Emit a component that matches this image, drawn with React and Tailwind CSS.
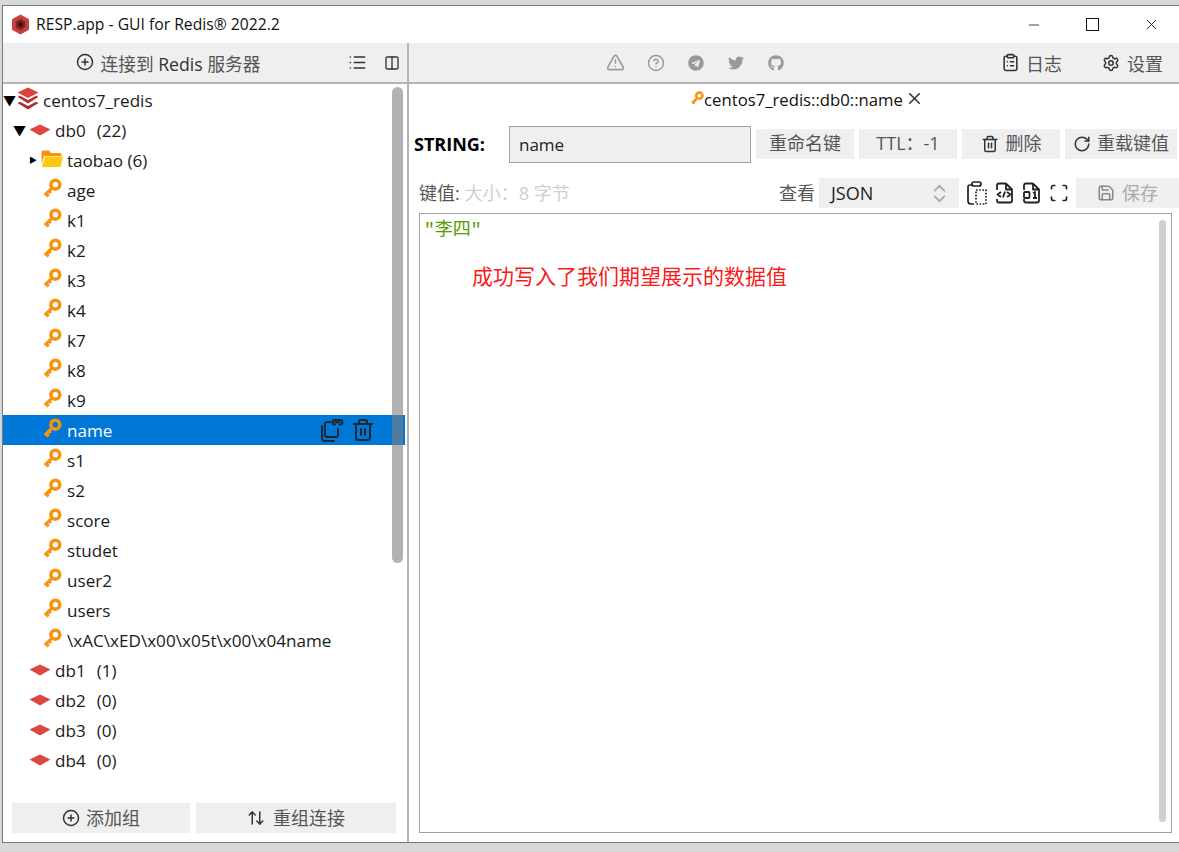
import React from 'react';
import { Minus, X, CirclePlus, List, Columns2, TriangleAlert, CircleHelp, ClipboardList, Settings, Trash2, RotateCw, Save, ChevronsUpDown, ArrowUpDown, Scan } from 'lucide-react';
import { FaTelegram, FaTwitter, FaGithub } from 'react-icons/fa';

const uiFont = '"Open Sans", "Noto Sans CJK SC", sans-serif';

const KeyIcon = ({ className }) => (
  <svg viewBox="0 0 18 18" className={className}>
    <circle cx="12" cy="6" r="4" fill="none" stroke="#f7930e" strokeWidth="3.2" />
    <path d="M9 9 L2.5 15.5 M3.5 14 L6 16.5 M6 11.5 L8 13.5" fill="none" stroke="#f7930e" strokeWidth="2.8" />
  </svg>
);

const DbIcon = () => (
  <svg viewBox="0 0 22 12" className="w-[22px] h-[12px] shrink-0">
    <path d="M11 0.5 L21.5 5.5 L11 11.5 L0.5 5.5 Z" fill="#dd4743" />
  </svg>
);

const StackIcon = () => (
  <svg viewBox="0 0 22 24" className="w-[22px] h-[24px] shrink-0">
    <path d="M11 0.5 L21.5 5.5 L11 11 L0.5 5.5 Z" fill="#d9423d" />
    <path d="M0.5 10 L3 8.8 L11 13 L19 8.8 L21.5 10 L11 16.5 Z" fill="#b03531" />
    <path d="M0.5 16 L3 14.8 L11 19 L19 14.8 L21.5 16 L11 22.5 Z" fill="#a5302d" />
  </svg>
);

const LogoIcon = () => (
  <svg viewBox="0 0 20 22" className="w-[19px] h-[21px] shrink-0">
    <path d="M10 0.5 L19 5.5 L19 16.5 L10 21.5 L1 16.5 L1 5.5 Z" fill="#c8403c" />
    <path d="M10 5 L15 8 L15 14 L10 17 L5 14 L5 8 Z" fill="#7c2422" />
    <circle cx="10" cy="11" r="2.6" fill="#3c1110" />
  </svg>
);

const FolderIcon = () => (
  <svg viewBox="0 0 22 18" className="w-[22px] h-[18px] shrink-0">
    <path d="M0.5 2 Q0.5 0.5 2 0.5 H8 L10 3 H19 Q20.5 3 20.5 4.5 V6 H3 L0.5 14 Z" fill="#f7930e" />
    <path d="M4 6.5 H22 L19.5 17 H0.8 Z" fill="#ffc808" />
  </svg>
);

const CopyLinkIcon = () => (
  <svg viewBox="0 0 24 24" fill="none" stroke="#1c2733" strokeWidth="2" strokeLinecap="round" strokeLinejoin="round" className="w-[24px] h-[24px]">
    <path d="M10 4 H7 Q5 4 5 6 V17 Q5 19 7 19 H16 Q18 19 18 17 V11" />
    <path d="M2 8 V20 Q2 23 5 23 H14" />
    <path d="M15 6.5 H14.5 Q12.5 6.5 12.5 4.5 Q12.5 2 14.5 2 H20 Q22.5 2 22.5 4.5 Q22.5 6.5 20 6.5 H19.5" />
    <path d="M15.5 4.3 H19.5" />
  </svg>
);

const ClipboardDashIcon = () => (
  <svg viewBox="0 0 20 24" fill="none" stroke="#222" strokeWidth="1.7" className="w-[20px] h-[24px]">
    <path d="M5 4 H3 Q1 4 1 6 V20 Q1 23 4 23 H7" />
    <rect x="5" y="1" width="9" height="4" rx="2" />
    <path d="M9 9 H19 V23 H9 Z" strokeDasharray="1.6 1.6" />
  </svg>
);

const FileOutline = () => (
  <path d="M11 1.5 H4 Q2 1.5 2 3.5 V8 M11 1.5 L17 7.5 V18.5 Q17 20.5 15 20.5 H4 Q2 20.5 2 18.5 V17 M11 1.5 V7.5 H17" />
);

const FileCodeIcon = () => (
  <svg viewBox="0 0 19 22" fill="none" stroke="#222" strokeWidth="1.8" strokeLinejoin="round" className="w-[19px] h-[22px]">
    <FileOutline />
    <path d="M6 10 L2.5 12.5 L6 15 M12 10 L15.5 12.5 L12 15 M10 9.5 L8 15.5" />
  </svg>
);

const FileBinaryIcon = () => (
  <svg viewBox="0 0 19 22" fill="none" stroke="#222" strokeWidth="1.8" strokeLinejoin="round" className="w-[19px] h-[22px]">
    <FileOutline />
    <rect x="2" y="10" width="5.5" height="6" rx="1" />
    <path d="M11 11 L13 10 V16 M11 16 H15" />
  </svg>
);

const GreyButton = ({ children, className = '' }) => (
  <div className={`bg-[#efefef] flex items-center justify-center text-[#555] ${className}`}>{children}</div>
);

const keys = ['age', 'k1', 'k2', 'k3', 'k4', 'k7', 'k8', 'k9', 'name', 's1', 's2', 'score', 'studet', 'user2', 'users', '\\xAC\\xED\\x00\\x05t\\x00\\x04name'];
const dbs = [['db1', 1], ['db2', 0], ['db3', 0], ['db4', 0], ['db5', 0]];

const Tree = () => (
  <div className="relative flex-1 min-h-0 overflow-hidden text-[17.1px] text-[#1a1a1a] pt-[1px] mr-[2px]">
    <div className="h-[30px] flex items-center">
      <span className="text-[13px] text-black w-[14px] leading-none">▼</span>
      <span className="-mt-[3px]"><StackIcon /></span>
      <span className="ml-[4px] mt-[1px]">centos7_redis</span>
    </div>
    <div className="h-[30px] flex items-center pl-[10px]">
      <span className="text-[13px] text-black w-[16px] leading-none">▼</span>
      <DbIcon />
      <span className="ml-[4px] mt-[2px]">db0</span>
      <span className="ml-[11px] mt-[2px]">(22)</span>
    </div>
    <div className="h-[30px] flex items-center pl-[26px]">
      <span className="text-[8px] text-black w-[12px] leading-none">▶</span>
      <span className="-mt-[2px]"><FolderIcon /></span>
      <span className="ml-[4px] mt-[2px]">taobao (6)</span>
    </div>
    {keys.map((k) => (
      <div key={k} className={`h-[30px] flex items-center pl-[39px] ${k === 'name' ? 'bg-[#0078d7] text-white' : ''}`}>
        <KeyIcon className="w-[20px] h-[20px] shrink-0 -mt-[4px]" />
        <span className="ml-[5px] flex-1 mt-[2px]">{k}</span>
        {k === 'name' && (
          <span className="flex items-center gap-[7px] pr-[30px]">
            <CopyLinkIcon />
            <Trash2 size={24} color="#1c2733" strokeWidth={2} />
          </span>
        )}
      </div>
    ))}
    {dbs.map(([d, n]) => (
      <div key={d} className="h-[30px] flex items-center pl-[26px]">
        <DbIcon />
        <span className="ml-[4px] mt-[2px]">{d}</span>
        <span className="ml-[11px] mt-[2px]">({n})</span>
      </div>
    ))}
    {/* overlay scrollbar */}
    <div className="absolute left-[389px] top-[3px] w-[11px] h-[476px] rounded-full bg-[#7f7f7f]/60" />
  </div>
);

const Sidebar = () => (
  <div className="w-[405px] shrink-0 flex flex-col border-r border-[#b5b5b5]">
    <div className="h-[41px] shrink-0 bg-[#efefef] border-b-2 border-[#b5b5b5] flex items-center text-[#555] text-[17.7px]">
      <div className="flex-1 flex items-center justify-center gap-[7px] pt-[3px] pr-[15px]">
        <CirclePlus size={18} color="#333" className="-mt-[3px]" />
        <span>连接到 <span className="text-[#333]">Redis</span> 服务器</span>
      </div>
      <div className="flex items-center gap-[17px] pr-[7px] text-[#333]">
        <List size={19} />
        <Columns2 size={16} />
      </div>
    </div>
    <Tree />
    <div className="h-[58px] shrink-0 flex items-start gap-[6px] pl-[9px] pr-[10px] pt-[19px] text-[18px]">
      <GreyButton className="w-[178px] h-[30px] gap-[6px]">
        <CirclePlus size={18} color="#333" />
        <span>添加组</span>
      </GreyButton>
      <GreyButton className="w-[200px] h-[30px] gap-[8px]">
        <ArrowUpDown size={18} color="#333" />
        <span>重组连接</span>
      </GreyButton>
    </div>
  </div>
);

const Toolbar = () => (
  <div className="h-[41px] shrink-0 bg-[#efefef] border-b-2 border-[#b5b5b5] flex items-center text-[18px] text-[#555] pl-[197px]">
    <div className="flex items-center gap-[22px] text-[#9a9a95]">
      <TriangleAlert size={19} />
      <CircleHelp size={18} />
      <FaTelegram size={16} className="ml-[1px]" />
      <FaTwitter size={16} className="ml-[2px]" />
      <FaGithub size={16} className="ml-[2px]" />
    </div>
    <div className="ml-auto flex items-center gap-[6px] mr-[40px] pt-[3px]">
      <ClipboardList size={19} color="#333" className="-mt-[3px]" />
      <span>日志</span>
    </div>
    <div className="flex items-center gap-[7px] mr-[16px] pt-[3px]">
      <Settings size={18} color="#333" className="-mt-[3px]" />
      <span>设置</span>
    </div>
  </div>
);

const KeyPanel = () => (
  <div className="flex-1 min-h-0 flex flex-col pl-[5px] pr-[2px] text-[16px]">
    <div className="h-[32px] shrink-0 flex items-center justify-center pl-[23px] text-[#222]">
      <KeyIcon className="w-[14px] h-[14px] -mt-[5px]" />
      <span className="text-[#111] text-[16.7px]">centos7_redis::db0::name</span>
      <X size={19} color="#333" className="ml-[2px] -mt-[3px]" />
    </div>
    <div className="h-[37px] mt-[10px] shrink-0 flex items-center text-[18px] gap-[5px]">
      <span className="w-[90px] shrink-0 font-bold text-black">STRING:</span>
      <div className="w-[242px] h-[37px] shrink-0 bg-[#efefef] border border-[#a0a0a0] flex items-center pl-[9px] text-[#222] text-[17px]">name</div>
      <GreyButton className="w-[98px] h-[30px] -mt-[2px] shrink-0">重命名键</GreyButton>
      <GreyButton className="w-[98px] h-[30px] -mt-[2px] shrink-0 text-[#333]">TTL：-1</GreyButton>
      <GreyButton className="w-[98px] h-[30px] -mt-[2px] shrink-0 gap-[7px]">
        <Trash2 size={18} color="#333" />
        <span>删除</span>
      </GreyButton>
      <GreyButton className="w-[112px] h-[30px] -mt-[2px] shrink-0 gap-[6px]">
        <RotateCw size={18} color="#333" />
        <span>重载键值</span>
      </GreyButton>
    </div>
    <div className="h-[30px] mt-[15px] shrink-0 flex items-center pl-[5px] text-[18px]">
      <span className="text-[#555]">键值:</span>
      <span className="ml-[5px] text-[#d0d0d0]">大小：8 字节</span>
      <span className="ml-auto text-[#555]">查看</span>
      <div className="ml-[4px] w-[140px] h-[30px] bg-[#efefef] flex items-center pl-[12px] pr-[8px] text-[#222]">
        <span className="flex-1">JSON</span>
        <ChevronsUpDown size={23} color="#aaa" />
      </div>
      <div className="ml-[8px] flex items-center gap-[8px]">
        <ClipboardDashIcon />
        <FileCodeIcon />
        <FileBinaryIcon />
        <Scan size={20} color="#222" />
      </div>
      <GreyButton className="ml-[7px] w-[103px] h-[30px] gap-[7px] text-[#aaa] -mr-[2px]">
        <Save size={18} color="#888" />
        <span>保存</span>
      </GreyButton>
    </div>
    <div className="relative h-[620px] mt-[5px] ml-[5px] mr-[5px] shrink-0 border border-[#a0a0a0] bg-white pl-[4px] pt-[3px]">
      <div className="text-[18px] text-[#5a9a00]" style={{ fontFamily: '"Liberation Mono", "Noto Sans CJK SC", monospace' }}>"李四"</div>
      <div className="mt-[17px] ml-[48px] text-[#fb1a1a] text-[21px]">成功写入了我们期望展示的数据值</div>
      <div className="absolute right-[5px] top-[6px] w-[7px] h-[602px] rounded-full bg-[#cfcfcf]" />
    </div>
  </div>
);

export default function App() {
  return (
    <div className="w-[1179px] h-[852px] overflow-hidden bg-[#d8d8d8] pt-[5px]" style={{ fontFamily: uiFont }}>
      <div className="ml-[2px] h-[838px] bg-white border-t-[1px] border-l-[1px] border-b-[1px] border-[#7a7a7a] flex flex-col">
        <div className="h-[37px] shrink-0 flex items-center pl-[8px] text-[15.7px] text-[#111]">
          <LogoIcon />
          <span className="ml-[6px]">RESP.app - GUI for Redis® 2022.2</span>
          <div className="ml-auto flex items-center gap-[44px] pr-[19px]">
            <Minus size={16} color="#111" strokeWidth={1.2} />
            <span className="w-[13px] h-[13px] border border-[#111]" />
            <X size={17} color="#111" strokeWidth={1.2} />
          </div>
        </div>
        <div className="flex-1 min-h-0 flex">
          <Sidebar />
          <div className="flex-1 min-w-0 flex flex-col border-l border-[#b5b5b5]">
            <Toolbar />
            <KeyPanel />
          </div>
        </div>
      </div>
    </div>
  );
}
